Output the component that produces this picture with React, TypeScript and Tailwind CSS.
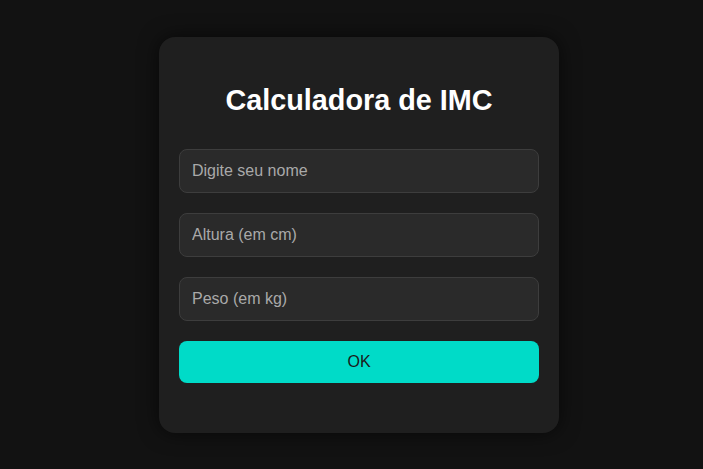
import React from "react";

export default function App() {
	return (
		<div
			className="min-h-screen w-full bg-[#121212] flex items-center justify-center pl-[15px]"
			style={{ fontFamily: '"Liberation Sans", Arial, sans-serif' }}
		>
			<div className="w-[400px] bg-[#1f1f1f] rounded-2xl pt-[47px] px-5 pb-[50px] shadow-[0_0_20px_rgba(0,0,0,0.6)] flex flex-col">
				<h1 className="text-[28.8px] leading-[33px] font-bold text-white text-center mb-[32px]">Calculadora de IMC</h1>
				<div className="flex flex-col gap-5">
					<input
						type="text"
						placeholder="Digite seu nome"
						className="h-[44px] w-full px-3 rounded-lg bg-[#2a2a2a] border border-[#3d3d3d] text-base text-white placeholder:text-[#a9a9a9] outline-none"
					/>
					<input
						type="number"
						placeholder="Altura (em cm)"
						className="h-[44px] w-full px-3 rounded-lg bg-[#2a2a2a] border border-[#3d3d3d] text-base text-white placeholder:text-[#a9a9a9] outline-none"
					/>
					<input
						type="number"
						placeholder="Peso (em kg)"
						className="h-[44px] w-full px-3 rounded-lg bg-[#2a2a2a] border border-[#3d3d3d] text-base text-white placeholder:text-[#a9a9a9] outline-none"
					/>
					<button className="h-[42px] w-full rounded-lg bg-[#00dbc8] text-base text-[#1a1a1a]">OK</button>
				</div>
			</div>
		</div>
	);
}
